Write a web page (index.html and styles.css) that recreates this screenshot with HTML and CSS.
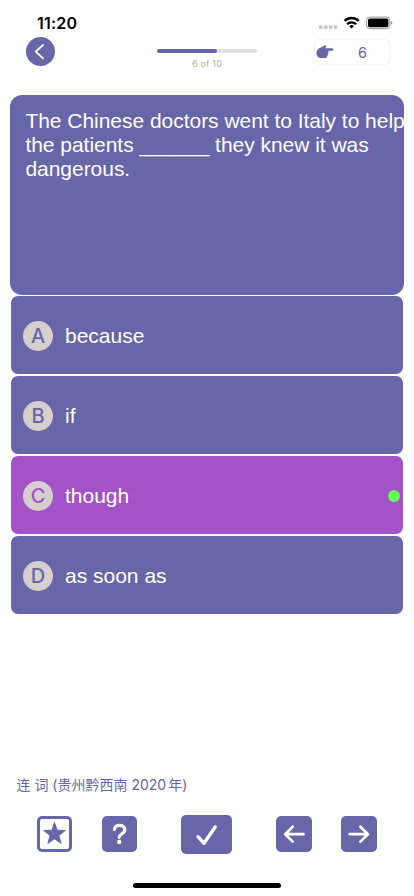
FILE: index.html
```
<!DOCTYPE html>
<html lang="en">
  <head>
    <meta charset="utf-8">
    <title>Quiz</title>
    <meta name="viewport" content="width=device-width, initial-scale=1">
    <link rel="stylesheet" href="styles.css">
  </head>
  <body>
    <div class="status">
      <span class="time">11:20</span>
      <svg class="status-icons" width="76" height="16" viewBox="318 15 76 16">
        <g fill="#c9c9c9">
          <rect x="318.8" y="25.2" width="3.6" height="3.8" rx="1"/>
          <rect x="323.8" y="25.2" width="3.6" height="3.8" rx="1"/>
          <rect x="328.8" y="25.2" width="3.6" height="3.8" rx="1"/>
          <rect x="333.7" y="25.2" width="3.6" height="3.8" rx="1"/>
        </g>
        <g fill="none" stroke="#000000" stroke-width="2.3">
          <path d="M344.5 20.9a10.2 10.2 0 0 1 14.2 0"/>
          <path d="M347.1 24.2a6.3 6.3 0 0 1 9 0"/>
        </g>
        <path d="M349.3 26.2a3.3 3.3 0 0 1 4.6 0l-2.3 2.4z"/>
        <rect x="366.6" y="17.1" width="23.2" height="11.6" rx="3.2" fill="none" stroke="#929292"/>
        <rect x="368" y="18.5" width="20.4" height="8.8" rx="1.8"/>
        <path d="M390.9 20.9c2 .7 2 3.1 0 3.8z" fill="#929292"/>
      </svg>
    </div>

    <div class="header">
      <div class="back">
        <svg width="29" height="29" viewBox="0 0 29 29"><path d="M17 8l-7.3 6.7L17 21.4"/></svg>
      </div>
      <div class="progress">
        <div class="track"><div class="bar" style="width: 60%"></div></div>
        <span>6 of 10</span>
      </div>
      <div class="score">
        <svg width="18" height="14" viewBox="0 0 18 14">
          <path d="M9 0.3C10.2 0 10.8 1 10.1 1.9L9 3.3h7.2c1.6 0 1.6 2.5 0 2.5h-4.1c.8.4.8 1.7-.1 2.1.5.7.3 1.6-.5 1.9.4.7.1 1.4-.6 1.7.1.9-.4 1.5-1.3 1.5H6C2.8 13.4.4 11.4.4 8.2S2.4 3.4 5 2.6z"/>
        </svg>
        <span>6</span>
      </div>
    </div>

    <div class="question">The Chinese doctors went to Italy to help<br>the patients ______ they knew it was<br>dangerous.</div>

    <div class="options">
      <div class="option"><span class="letter">A</span><span>because</span></div>
      <div class="option"><span class="letter">B</span><span>if</span></div>
      <div class="option selected"><span class="letter">C</span><span>though</span><i class="dot"></i></div>
      <div class="option"><span class="letter">D</span><span>as soon as</span></div>
    </div>

    <div class="source">连 词 (贵州黔西南 2020<span>年</span>)</div>

    <div class="toolbar">
      <div class="button star">
        <svg width="35" height="36" viewBox="0 0 35 36"><path d="M17.5 6.8l2.7 7.4 8 .3-6.3 5 2.2 7.8-6.6-4.5-6.6 4.5 2.2-7.8-6.3-5 8-.3z"/></svg>
      </div>
      <div class="button help">
        <svg width="35" height="36" viewBox="0 0 35 36">
          <path d="M12.4 13.4c.3-2.9 2.4-4.1 5.1-4.1 3.1 0 5.4 1.6 5.4 4.4 0 4-5.7 4-5.7 7.6"/>
          <circle cx="17.2" cy="26" r="2.2"/>
        </svg>
      </div>
      <div class="button check">
        <svg width="51" height="39" viewBox="0 0 51 39"><path d="M17 21.7l6 6.6L34.2 12"/></svg>
      </div>
      <div class="button prev">
        <svg width="36" height="36" viewBox="0 0 36 36"><path d="M16.7 10.8L9.2 18.2l7.5 7.4M9.5 18.2h18"/></svg>
      </div>
      <div class="button next">
        <svg width="36" height="36" viewBox="0 0 36 36"><path d="M19.4 10.8l7.5 7.4-7.5 7.4M26.6 18.2h-18"/></svg>
      </div>
    </div>

    <div class="home"></div>
  </body>
</html>
```
FILE: styles.css
```
* {
  box-sizing: border-box;
}

body {
  background: #ffffff;
  color: #6666a9;
  display: flex;
  flex-direction: column;
  font-family: "Liberation Sans", "Noto Sans CJK SC", sans-serif;
  height: 896px;
  margin: 0;
  overflow: hidden;
  width: 414px;
}

svg {
  display: block;
}

.status {
  display: flex;
  height: 37px;
  justify-content: space-between;
  padding: 15px 20px 0 37px;
}

.time {
  color: #000000;
  font-family: Inter, sans-serif;
  font-size: 16px;
  font-weight: 600;
  letter-spacing: 0.2px;
  line-height: 17px;
}

.header {
  display: flex;
  height: 58px;
  padding-left: 26px;
}

.back {
  background: #6666a9;
  border-radius: 50%;
  height: 29px;
  width: 29px;
}

.back path {
  fill: none;
  stroke: #ffffff;
  stroke-linecap: round;
  stroke-linejoin: round;
  stroke-width: 1.8;
}

.progress {
  color: #b0b0b0;
  font-family: Inter, sans-serif;
  font-size: 9px;
  letter-spacing: 0.2px;
  line-height: 12px;
  margin: 12px 0 0 102px;
  text-align: center;
  width: 100px;
}

.track {
  background: #e0e0e0;
  border-radius: 2px;
  height: 4px;
  margin-bottom: 5px;
}

.bar {
  background: #6666a9;
  border-radius: 2px;
  height: 4px;
}

.score {
  align-items: center;
  border-radius: 4px;
  box-shadow: 0 0 2px #00000026;
  display: flex;
  font-family: Inter, sans-serif;
  font-size: 14.5px;
  height: 24px;
  margin: 3px 0 0 58px;
  padding-left: 1px;
  width: 74px;
}

.score svg {
  fill: #6666a9;
}

.score span {
  margin-left: 24px;
}

.question {
  background: #6666a9;
  border-radius: 12px;
  color: #ffffff;
  font-size: 21px;
  height: 200px;
  letter-spacing: -0.03px;
  line-height: 24px;
  margin: 0 10px;
  padding: 14px 0 0 15.4px;
  white-space: nowrap;
}

.options {
  display: flex;
  flex-direction: column;
  gap: 2px;
  margin: 1px 11px 0;
}

.option {
  align-items: center;
  background: #6666a9;
  border-radius: 7px;
  color: #ffffff;
  display: flex;
  font-size: 21px;
  height: 78px;
  padding: 1px 3px 0 12px;
}

.letter {
  background: #d7cfcd;
  border-radius: 50%;
  color: #6666a9;
  font-family: Inter, sans-serif;
  font-size: 20px;
  font-weight: 500;
  height: 30px;
  line-height: 30px;
  margin-right: 12px;
  text-align: center;
  width: 30px;
}

.selected {
  background: #a353c7;
}

.selected .letter {
  color: #a353c7;
}

.dot {
  background: #65ff56;
  border-radius: 50%;
  height: 12px;
  margin-left: auto;
  width: 12px;
}

.source {
  font-family: Inter, "Noto Sans CJK SC", sans-serif;
  font-size: 14px;
  line-height: 20px;
  margin: 161px 0 0 16.5px;
}

.source span {
  margin-left: 2px;
}

.toolbar {
  align-items: center;
  display: flex;
  height: 40px;
  margin: 19px 0 0 37px;
}

.button {
  background: #6666a9;
  border-radius: 5px;
}

.button path {
  fill: none;
  stroke: #ffffff;
  stroke-linecap: round;
  stroke-linejoin: round;
  stroke-width: 2.7;
}

.star {
  background: #ffffff;
  box-shadow: inset 0 0 0 3px #6666a9;
}

.star path {
  fill: #6666a9;
  stroke: #6666a9;
  stroke-width: 1;
}

.help {
  margin-left: 30px;
}

.help path {
  stroke-width: 3.2;
}

.help circle {
  fill: #ffffff;
}

.check {
  margin-left: 44px;
}

.check path {
  stroke-width: 3.4;
}

.prev {
  margin-left: 44.3px;
}

.next {
  margin-left: 29px;
}

.home {
  background: #000000;
  border-radius: 3px;
  height: 5px;
  margin: 28.5px 0 0 133px;
  width: 148px;
}
```
